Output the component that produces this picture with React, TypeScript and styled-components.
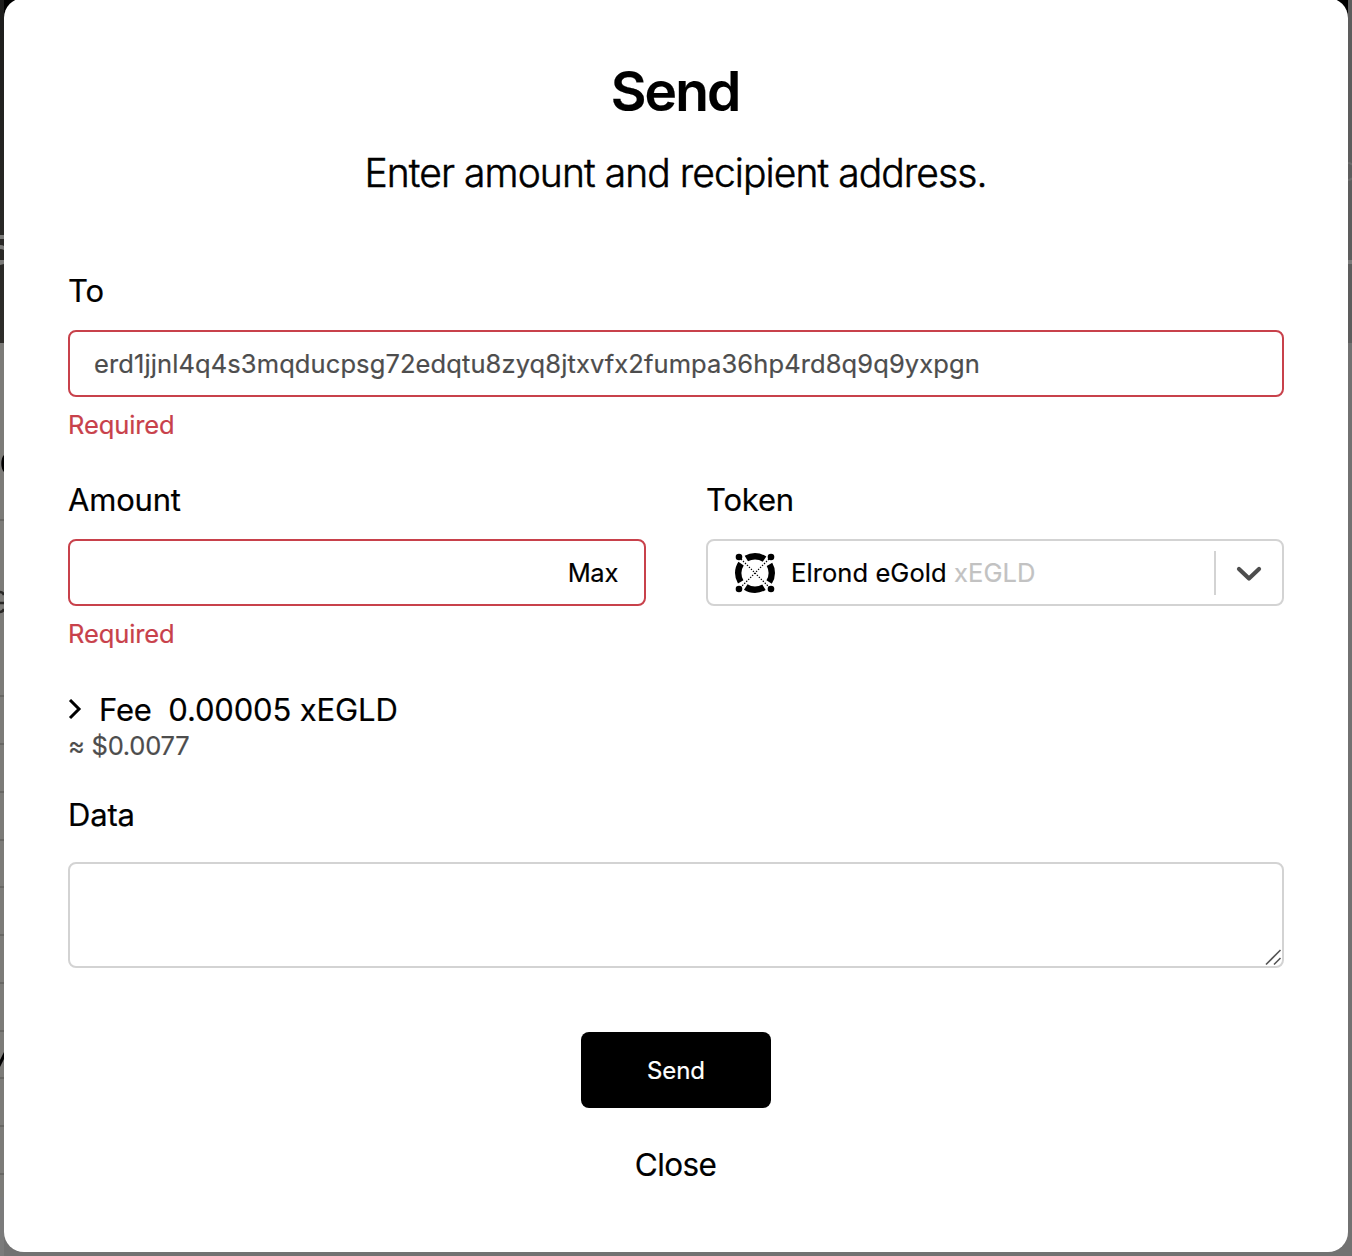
import React from "react";
import styled, { createGlobalStyle } from "styled-components";

const GlobalStyle = createGlobalStyle`
  *, *::before, *::after { box-sizing: border-box; }
  body {
    margin: 0;
    overflow: hidden;
    font-family: Inter, "Liberation Sans", sans-serif;
    color: #000;
    -webkit-text-stroke: 0.2px;
  }
`;

const Page = styled.div`
  width: 1352px;
  height: 1256px;
  display: grid;
  grid-template-columns: 4px 1344px 4px;
  overflow: hidden;
  background: linear-gradient(#000 0 343px, #727272 343px);
`;

const Edge = styled.svg`
  display: block;
`;

const Dialog = styled.form`
  height: 1254px;
  margin: -2px 0 0;
  padding: 61px 64px 0;
  border-radius: 20px;
  background: #fff;
  display: flex;
  flex-direction: column;
`;

const Title = styled.h1`
  margin: 0;
  padding-right: 2px;
  font-size: 55px;
  line-height: 64px;
  font-weight: 600;
  letter-spacing: -1.9px;
  text-align: center;
`;

const Subtitle = styled.p`
  margin: 18px 0 66px;
  padding-right: 1px;
  font-size: 39px;
  line-height: 64px;
  font-weight: 300;
  letter-spacing: -0.92px;
  text-align: center;
  -webkit-text-stroke: 0.5px;
`;

const Field = styled.div<{ $gap?: number }>`
  display: flex;
  flex-direction: column;
  margin-bottom: ${(p) => p.$gap ?? 0}px;
`;

const Columns = styled.div`
  display: grid;
  grid-template-columns: 578px 578px;
  justify-content: space-between;
  height: 171px;
`;

const Label = styled.label<{ $after?: number }>`
  font-size: 31px;
  line-height: 40px;
  letter-spacing: -0.2px;
  margin-bottom: ${(p) => p.$after ?? 19}px;
`;

const Control = styled.div<{ $invalid?: boolean }>`
  height: 67px;
  display: flex;
  align-items: center;
  border: 2px solid ${(p) => (p.$invalid ? "#c8414b" : "#d3d3d3")};
  border-radius: 8px;
  background: #fff;
  font-size: 25.5px;
`;

const Input = styled.input`
  flex: 1;
  min-width: 0;
  height: 100%;
  padding: 0 24px;
  border: 0;
  outline: 0;
  background: transparent;
  font: inherit;
  letter-spacing: 0.1px;
  &::placeholder { color: #4d4d4d; opacity: 1; }
`;

const MaxButton = styled.button`
  border: 0;
  padding: 0 26px 0 0;
  background: none;
  font: inherit;
  letter-spacing: -0.3px;
  color: #000;
`;

const ErrorText = styled.div`
  margin-top: 12px;
  font-size: 25.5px;
  line-height: 32px;
  letter-spacing: -0.1px;
  color: #c8414b;
`;

const TokenName = styled.span`
  flex: 1;
  margin-left: 15px;
  letter-spacing: 0.08px;
  white-space: pre;
`;

const Ticker = styled.span`
  color: #c2c2c2;
`;

const TokenIcon = styled.svg`
  margin-left: 26px;
  margin-top: 1px;
`;

const Indicator = styled.div`
  width: 68px;
  height: 44px;
  border-left: 2px solid #d3d3d3;
  display: flex;
  align-items: center;
  justify-content: center;
  svg { margin-top: 3px; }
`;

const FeeRow = styled.div`
  display: flex;
  align-items: center;
  font-size: 31px;
  line-height: 40px;
  letter-spacing: -0.15px;
`;

const FeeLabel = styled.span`
  margin: 0 16.5px 0 17px;
`;

const FeeUsd = styled.div`
  margin-bottom: 33px;
  font-size: 25.5px;
  line-height: 32px;
  letter-spacing: -0.25px;
  color: #4d4d4d;
`;

const DataBox = styled.div`
  position: relative;
  height: 106px;
`;

const TextArea = styled.textarea`
  display: block;
  width: 100%;
  height: 100%;
  padding: 16px 24px;
  border: 2px solid #d3d3d3;
  border-radius: 8px;
  resize: none;
  outline: 0;
  font: 26px Inter, sans-serif;
`;

const Grip = styled.svg`
  position: absolute;
  right: 1px;
  bottom: 2px;
  pointer-events: none;
`;

const SendButton = styled.button`
  align-self: center;
  width: 190px;
  height: 76px;
  margin: 64px 0 37px;
  border: 0;
  border-radius: 8px;
  background: #000;
  color: #fff;
  font: 24px Inter, sans-serif;
  letter-spacing: -0.1px;
`;

const CloseButton = styled.button`
  align-self: center;
  padding: 0 1px 0 0;
  border: 0;
  background: none;
  color: #000;
  font: 31.5px/40px Inter, sans-serif;
  letter-spacing: -0.6px;
`;

const Spacer = styled.div`
  height: 39px;
`;

const rowLines = [519, 695, 743, 791, 839, 886, 934, 982, 1030, 1077, 1125, 1173];

const LeftEdge = () => (
  <Edge width="4" height="1256" viewBox="0 0 4 1256">
    <defs>
      <linearGradient id="dark" x1="0" y1="0" x2="0" y2="1">
        <stop offset="0" stopColor="#1d1d1c" />
        <stop offset="1" stopColor="#2e2d2a" />
      </linearGradient>
    </defs>
    <rect width="4" height="343" fill="url(#dark)" />
    <rect y="343" width="4" height="854" fill="#7c7b78" />
    <rect y="1197" width="4" height="59" fill="#7b7b7b" />
    <path d="M0 235H4V239H0ZM0 245Q3 245 4 246V250Q2 249 0 249ZM0 260H4V264L0 265Z" fill="#7a7a78" />
    {rowLines.map((y) => (
      <rect key={y} y={y} width="4" height="2" fill="#686764" />
    ))}
    <path d="M4 455C.4 458 .4 469 4 472Z" fill="#000" />
    <path d="M0 592Q3 592 4 595M0 603H4M0 612Q3 612 4 609" fill="none" stroke="#292826" strokeWidth="2.5" />
    <path d="M4 1052V1059L0 1067V1060Z" fill="#000" />
  </Edge>
);

const RightEdge = () => (
  <Edge width="4" height="1256" viewBox="0 0 4 1256">
    <rect width="4" height="343" fill="#5d5d5d" />
    <rect y="343" width="4" height="913" fill="#727272" />
    <path d="M0 163Q3 163 4 165M0 180Q3 180 4 178" fill="none" stroke="#6c6c6c" strokeWidth="2" />
    <rect y="260" width="4" height="4" fill="#7c7c7c" />
  </Edge>
);

const EgoldIcon = () => (
  <TokenIcon width="42" height="42" viewBox="0 0 42 42">
    <circle cx="21" cy="21" r="16.8" fill="none" stroke="#000" strokeWidth="6.4" strokeDasharray="19.2 7.19" strokeDashoffset="9.6" />
    <path d="M5 5L37 37M37 5L5 37" stroke="#000" strokeWidth="1.1" strokeDasharray="1.5 1.3" />
    <g fill="#000">
      <circle cx="5" cy="5" r="3.3" />
      <circle cx="37" cy="5" r="3.3" />
      <circle cx="5" cy="37" r="3.3" />
      <circle cx="37" cy="37" r="3.3" />
    </g>
  </TokenIcon>
);

export default function App() {
  return (
    <>
      <GlobalStyle />
      <Page>
        <LeftEdge />
        <Dialog onSubmit={(e) => e.preventDefault()}>
          <Title>Send</Title>
          <Subtitle>Enter amount and recipient address.</Subtitle>

          <Field $gap={39}>
            <Label htmlFor="to">To</Label>
            <Control $invalid>
              <Input id="to" placeholder="erd1jjnl4q4s3mqducpsg72edqtu8zyq8jtxvfx2fumpa36hp4rd8q9q9yxpgn" />
            </Control>
            <ErrorText>Required</ErrorText>
          </Field>

          <Columns>
            <Field>
              <Label htmlFor="amount">Amount</Label>
              <Control $invalid>
                <Input id="amount" />
                <MaxButton type="button">Max</MaxButton>
              </Control>
              <ErrorText>Required</ErrorText>
            </Field>
            <Field>
              <Label>Token</Label>
              <Control>
                <EgoldIcon />
                <TokenName>
                  Elrond eGold <Ticker>xEGLD</Ticker>
                </TokenName>
                <Indicator>
                  <svg width="26" height="16" viewBox="0 0 26 16">
                    <path d="M3 3L13 12.5L23 3" fill="none" stroke="#4d4d4d" strokeWidth="4.2" strokeLinecap="round" strokeLinejoin="round" />
                  </svg>
                </Indicator>
              </Control>
            </Field>
          </Columns>

          <Spacer />
          <FeeRow>
            <svg width="14" height="22" viewBox="0 0 14 22">
              <path d="M2 1L11 10L2 19" fill="none" stroke="#000" strokeWidth="3" />
            </svg>
            <FeeLabel>Fee</FeeLabel>
            <span>0.00005 xEGLD</span>
          </FeeRow>
          <FeeUsd>≈ $0.0077</FeeUsd>

          <Label htmlFor="data" $after={27}>Data</Label>
          <DataBox>
            <TextArea id="data" />
            <Grip width="18" height="18" viewBox="0 0 18 18">
              <path d="M1 16.5L15.5 2M9 16.5L15.5 10" fill="none" stroke="#555" strokeWidth="1.6" />
            </Grip>
          </DataBox>

          <SendButton type="submit">Send</SendButton>
          <CloseButton type="button">Close</CloseButton>
        </Dialog>
        <RightEdge />
      </Page>
    </>
  );
}
